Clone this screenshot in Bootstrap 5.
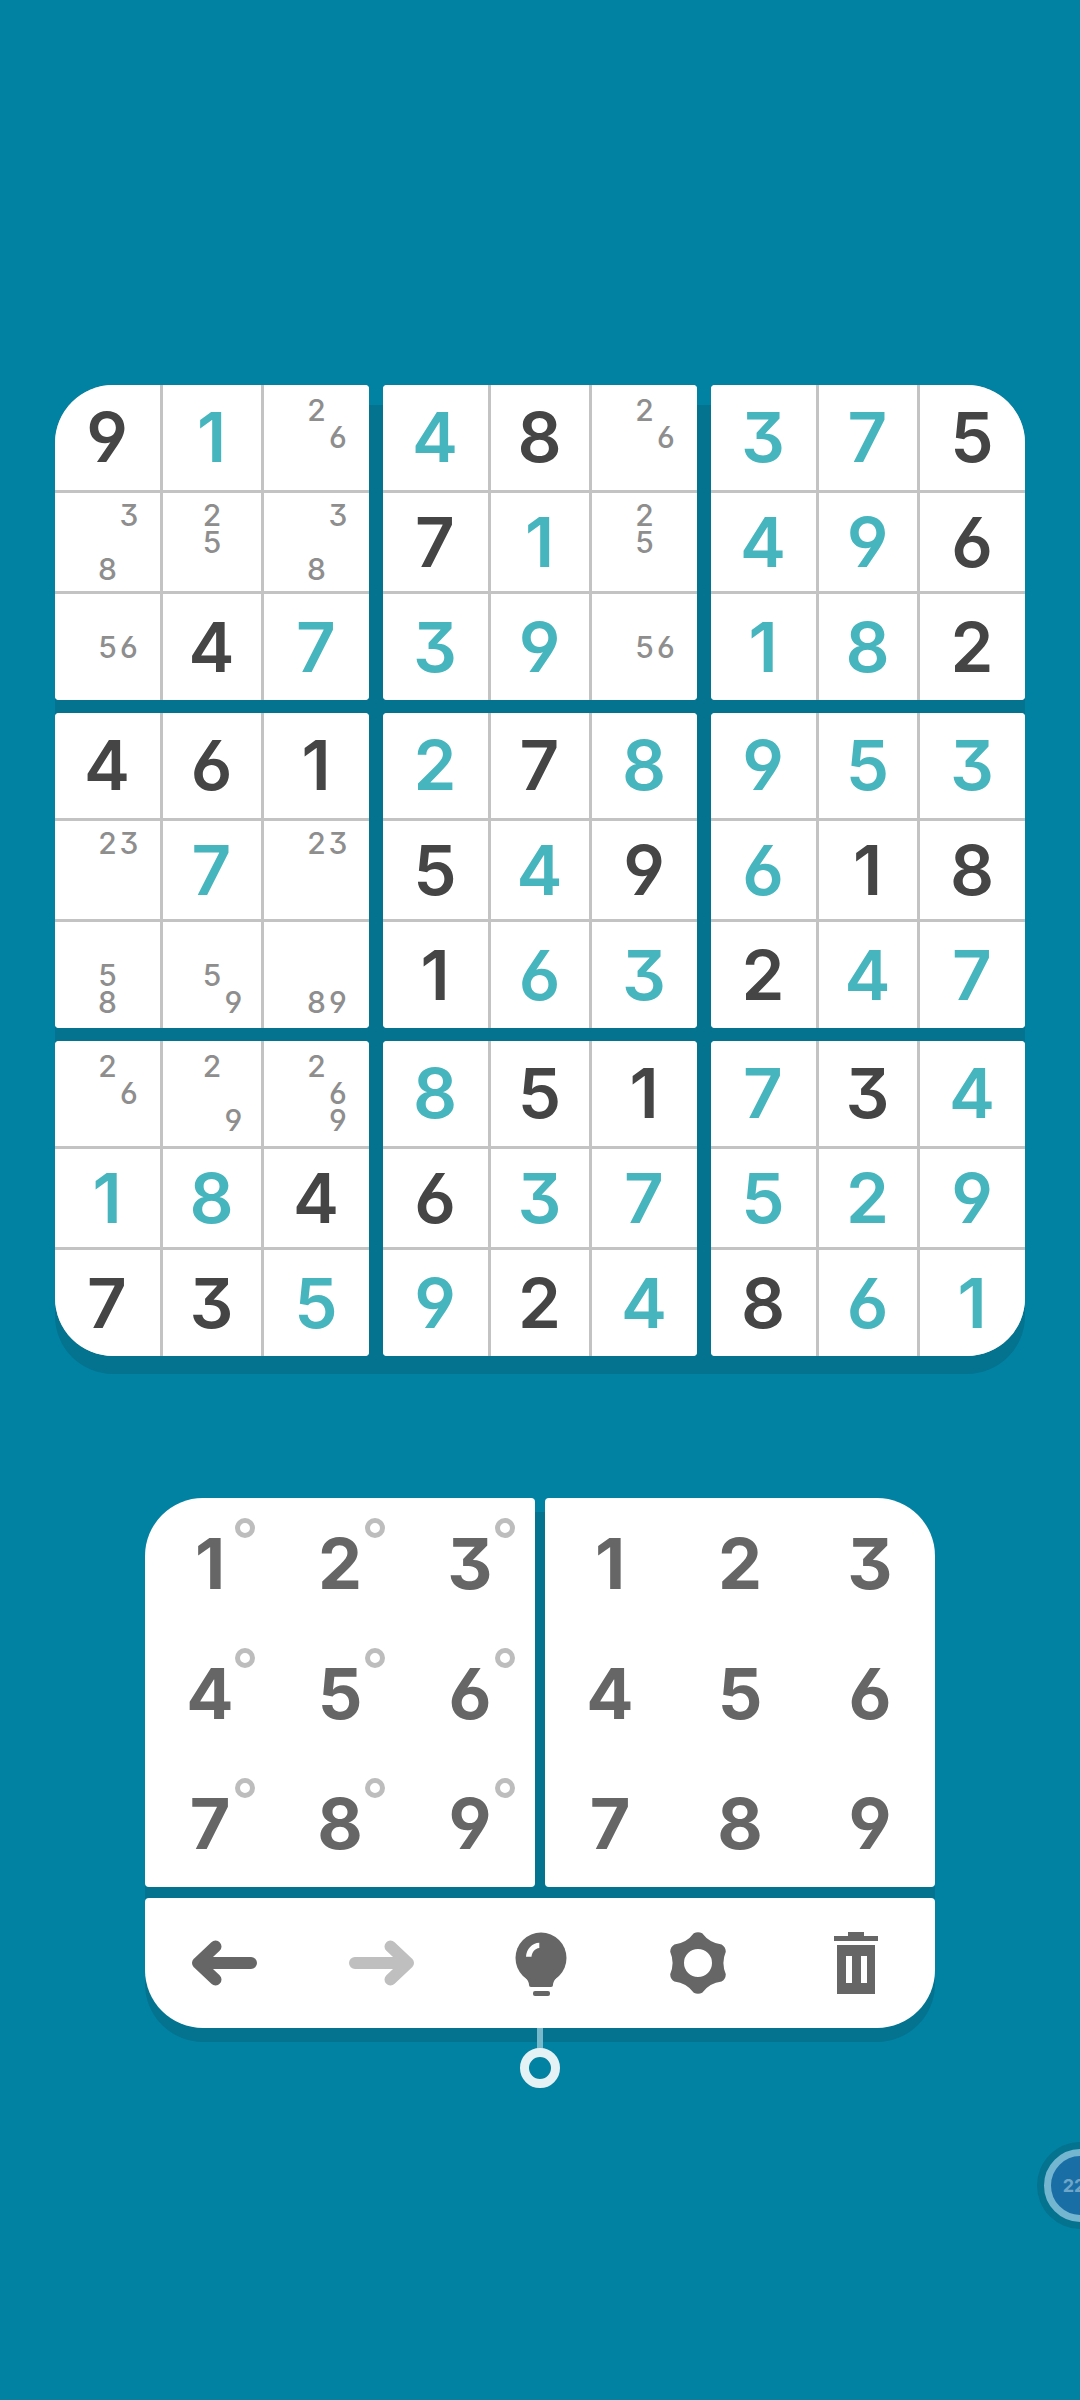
<!doctype html>
<html lang="en">
<head>
<meta charset="utf-8">
<title>Sudoku</title>
<link rel="stylesheet" href="https://cdn.jsdelivr.net/npm/bootstrap@5.3.0/dist/css/bootstrap.min.css">
<style>
:root{--bgc:#0282a2;--shd:#03738f}
body{background:var(--bgc);height:2400px;font-family:Inter,"Liberation Sans",sans-serif;font-feature-settings:"cv03","cv04","cv09"}
.stage{padding-top:385px;height:2400px}
.board{width:970px;grid-template-columns:repeat(3,314px);grid-template-rows:repeat(3,315px);column-gap:14px;row-gap:13px;border-radius:58px;background:linear-gradient(transparent 20px,var(--shd) 20px);box-shadow:0 18px 0 var(--shd)}
.box{display:grid;grid-template-columns:105px 98px 105px;grid-template-rows:105px 98px 106px;gap:3px;background:#c3c3c3;border-radius:4px;overflow:hidden}
.ctl{border-top-left-radius:58px}.ctr{border-top-right-radius:58px}.cbl{border-bottom-left-radius:58px}.cbr{border-bottom-right-radius:58px}
.sq{background:#fff;display:flex;align-items:center;justify-content:center;font-size:69px;line-height:1;font-weight:600;padding-right:1px}
.tl{color:#47b5bd}.dk{color:#454545}
.nts{display:grid;grid-template-columns:repeat(3,21.5px);grid-template-rows:repeat(3,27px);align-content:center;justify-content:center;font-size:30px;font-weight:500;color:#8e8e8e;padding-right:0}
.nts span{display:flex;align-items:center;justify-content:center;line-height:27px;height:27px}
.n2{grid-area:1/2}.n3{grid-area:1/3}.n5{grid-area:2/2}.n6{grid-area:2/3}.n8{grid-area:3/2}.n9{grid-area:3/3}
.pad{width:790px;margin-top:142px;grid-template-columns:390px 390px;column-gap:10px;row-gap:11px;border-radius:58px;background:linear-gradient(transparent 14px,var(--shd) 14px);box-shadow:0 14px 0 var(--shd)}
.keys{display:grid;grid-template-columns:repeat(3,130px);grid-template-rows:repeat(3,130px);height:389px;background:#fff;border-radius:4px}
.kl{border-top-left-radius:58px}.kr{border-top-right-radius:58px}
.key{display:flex;align-items:center;justify-content:center;font-size:70px;line-height:1;font-weight:700;color:#666;padding-top:2px}
.ring{position:absolute;left:90px;top:20px;width:20px;height:20px;border:5.5px solid #bdbdbd;border-radius:50%}
.tools{grid-column:1/3;height:130px;background:#fff;border-radius:4px 4px 58px 58px}
.tools>div{width:158px}
.tether{width:6px;height:22px;background:#78b8cb;margin-bottom:-2px}
.knob{width:40px;height:40px;border:9px solid #e4f2f5;border-radius:50%}
.timer{right:-44px;top:2142px;width:87px;height:87px;background:#03738f}
.timer-in{width:73px;height:73px;background:#1a6ea6;border:7px solid #74b6d0;font-size:18px;font-weight:700;color:#6fa6c8;padding-right:13px;justify-content:center}
</style>
</head>
<body class="overflow-hidden position-relative m-0">
<main class="stage d-flex flex-column align-items-center">
<section class="board d-grid">
<div class="box ctl">
<div class="sq dk">9</div><div class="sq tl">1</div><div class="sq nts"><span class="n2">2</span><span class="n6">6</span></div>
<div class="sq nts"><span class="n3">3</span><span class="n8">8</span></div><div class="sq nts"><span class="n2">2</span><span class="n5">5</span></div><div class="sq nts"><span class="n3">3</span><span class="n8">8</span></div>
<div class="sq nts"><span class="n5">5</span><span class="n6">6</span></div><div class="sq dk">4</div><div class="sq tl">7</div>
</div>
<div class="box">
<div class="sq tl">4</div><div class="sq dk">8</div><div class="sq nts"><span class="n2">2</span><span class="n6">6</span></div>
<div class="sq dk">7</div><div class="sq tl">1</div><div class="sq nts"><span class="n2">2</span><span class="n5">5</span></div>
<div class="sq tl">3</div><div class="sq tl">9</div><div class="sq nts"><span class="n5">5</span><span class="n6">6</span></div>
</div>
<div class="box ctr">
<div class="sq tl">3</div><div class="sq tl">7</div><div class="sq dk">5</div>
<div class="sq tl">4</div><div class="sq tl">9</div><div class="sq dk">6</div>
<div class="sq tl">1</div><div class="sq tl">8</div><div class="sq dk">2</div>
</div>
<div class="box">
<div class="sq dk">4</div><div class="sq dk">6</div><div class="sq dk">1</div>
<div class="sq nts"><span class="n2">2</span><span class="n3">3</span></div><div class="sq tl">7</div><div class="sq nts"><span class="n2">2</span><span class="n3">3</span></div>
<div class="sq nts"><span class="n5">5</span><span class="n8">8</span></div><div class="sq nts"><span class="n5">5</span><span class="n9">9</span></div><div class="sq nts"><span class="n8">8</span><span class="n9">9</span></div>
</div>
<div class="box">
<div class="sq tl">2</div><div class="sq dk">7</div><div class="sq tl">8</div>
<div class="sq dk">5</div><div class="sq tl">4</div><div class="sq dk">9</div>
<div class="sq dk">1</div><div class="sq tl">6</div><div class="sq tl">3</div>
</div>
<div class="box">
<div class="sq tl">9</div><div class="sq tl">5</div><div class="sq tl">3</div>
<div class="sq tl">6</div><div class="sq dk">1</div><div class="sq dk">8</div>
<div class="sq dk">2</div><div class="sq tl">4</div><div class="sq tl">7</div>
</div>
<div class="box cbl">
<div class="sq nts"><span class="n2">2</span><span class="n6">6</span></div><div class="sq nts"><span class="n2">2</span><span class="n9">9</span></div><div class="sq nts"><span class="n2">2</span><span class="n6">6</span><span class="n9">9</span></div>
<div class="sq tl">1</div><div class="sq tl">8</div><div class="sq dk">4</div>
<div class="sq dk">7</div><div class="sq dk">3</div><div class="sq tl">5</div>
</div>
<div class="box">
<div class="sq tl">8</div><div class="sq dk">5</div><div class="sq dk">1</div>
<div class="sq dk">6</div><div class="sq tl">3</div><div class="sq tl">7</div>
<div class="sq tl">9</div><div class="sq dk">2</div><div class="sq tl">4</div>
</div>
<div class="box cbr">
<div class="sq tl">7</div><div class="sq dk">3</div><div class="sq tl">4</div>
<div class="sq tl">5</div><div class="sq tl">2</div><div class="sq tl">9</div>
<div class="sq dk">8</div><div class="sq tl">6</div><div class="sq tl">1</div>
</div>
</section>

<section class="pad d-grid">
<div class="keys kl">
<div class="key position-relative">1<span class="ring"></span></div><div class="key position-relative">2<span class="ring"></span></div><div class="key position-relative">3<span class="ring"></span></div>
<div class="key position-relative">4<span class="ring"></span></div><div class="key position-relative">5<span class="ring"></span></div><div class="key position-relative">6<span class="ring"></span></div>
<div class="key position-relative">7<span class="ring"></span></div><div class="key position-relative">8<span class="ring"></span></div><div class="key position-relative">9<span class="ring"></span></div>
</div>
<div class="keys kr">
<div class="key">1</div><div class="key">2</div><div class="key">3</div>
<div class="key">4</div><div class="key">5</div><div class="key">6</div>
<div class="key">7</div><div class="key">8</div><div class="key">9</div>
</div>
<div class="tools d-flex">
<div class="d-flex align-items-center justify-content-center"><svg width="66" height="46" viewBox="0 0 66 46" fill="none" stroke="#666" stroke-width="12" stroke-linecap="round" stroke-linejoin="round"><path d="M60 23H7M24.500 6.500 7 23l17.500 16.500"/></svg></div>
<div class="d-flex align-items-center justify-content-center"><svg width="66" height="46" viewBox="0 0 66 46" fill="none" stroke="#bfbfbf" stroke-width="12" stroke-linecap="round" stroke-linejoin="round"><path d="M6 23h53M41.500 6.500 59 23 41.500 39.500"/></svg></div>
<div class="d-flex align-items-center justify-content-center"><svg width="60" height="66" viewBox="-1 0 60 66"><circle cx="30" cy="28" r="25.500" fill="#666"/><path fill="#666" d="M12 44C16 49 18 52 18 55Q18 57 20 57H40Q42 57 42 55C42 52 44 49 48 44Z"/><rect x="22" y="61" width="17" height="5" rx="2" fill="#666"/><path fill="#fff" d="M15 26.700C15.500 19 21 13 28.300 12.700V18C24 18.500 21 22 20.500 26.700Z"/></svg></div>
<div class="d-flex align-items-center justify-content-center"><svg width="64" height="64" viewBox="0 0 64 64"><path fill="#666" fill-rule="evenodd" d="M27.800 2.300Q32 0 36.200 2.300Q43.500 12.100 55.600 13.500Q59.700 16 59.800 20.800Q55 32 59.800 43.200Q59.700 48 55.600 50.500Q43.500 51.900 36.200 61.700Q32 64 27.800 61.700Q20.500 51.900 8.400 50.500Q4.300 48 4.200 43.200Q9 32 4.200 20.800Q4.300 16 8.400 13.500Q20.500 12.100 27.800 2.300ZM32 18A14 14 0 1 0 32 46A14 14 0 1 0 32 18Z"/></svg></div>
<div class="d-flex align-items-center justify-content-center"><svg width="44" height="62" viewBox="0 0 44 62"><path fill="#666" fill-rule="evenodd" d="M14 0H30V4H44V9H0V4H14ZM3 13H41V62H3ZM12 24V51H18V24ZM27 24V51H33V24Z"/></svg></div>
</div>
</section>
<div class="tether"></div>
<div class="knob"></div>
</main>
<aside class="timer position-absolute rounded-circle d-flex align-items-center justify-content-center">
<div class="timer-in rounded-circle d-flex align-items-center flex-shrink-0">22</div>
</aside>
</body>
</html>
